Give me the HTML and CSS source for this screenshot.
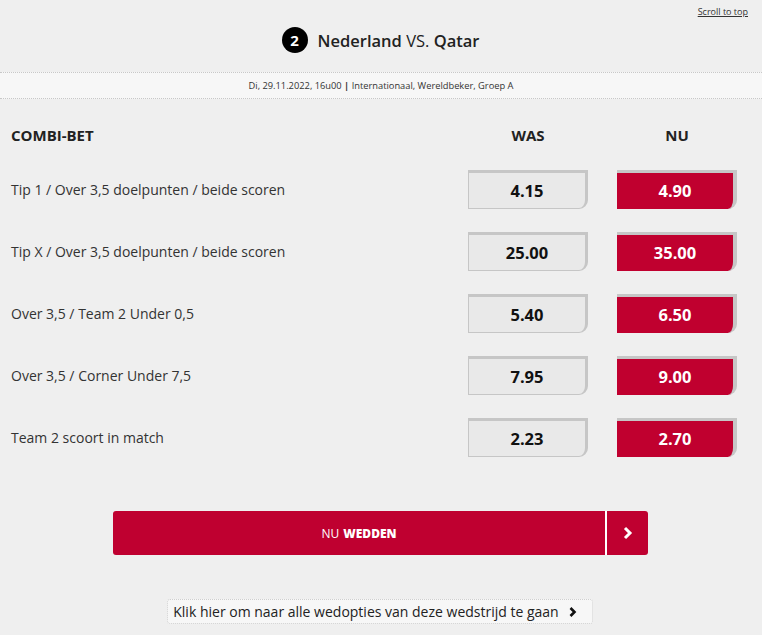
FILE: index.html
```html
<!DOCTYPE html>
<html lang="nl">
<head>
<meta charset="utf-8">
<title>Nederland vs Qatar</title>
<link rel="stylesheet" href="styles.css">
</head>
<body>
<div class="page">
  <header class="top">
    <div class="scroll-row"><a class="scroll-top" href="#">Scroll to top</a></div>
    <div class="match">
      <span class="badge">2</span>
      <span class="teams"><strong>Nederland</strong> VS. <strong>Qatar</strong></span>
    </div>
  </header>
  <div class="info">Di, 29.11.2022, 16u00 <b>|</b> Internationaal, Wereldbeker, Groep A</div>

  <section class="table">
    <div class="row head">
      <div class="label-h">COMBI-BET</div>
      <div class="col-h">WAS</div>
      <div class="col-h">NU</div>
    </div>
    <div class="row">
      <div class="label">Tip 1 / Over 3,5 doelpunten / beide scoren</div>
      <div class="odd was">4.15</div>
      <div class="odd nu">4.90</div>
    </div>
    <div class="row">
      <div class="label">Tip X / Over 3,5 doelpunten / beide scoren</div>
      <div class="odd was">25.00</div>
      <div class="odd nu">35.00</div>
    </div>
    <div class="row">
      <div class="label">Over 3,5 / Team 2 Under 0,5</div>
      <div class="odd was">5.40</div>
      <div class="odd nu">6.50</div>
    </div>
    <div class="row">
      <div class="label">Over 3,5 / Corner Under 7,5</div>
      <div class="odd was">7.95</div>
      <div class="odd nu">9.00</div>
    </div>
    <div class="row">
      <div class="label">Team 2 scoort in match</div>
      <div class="odd was">2.23</div>
      <div class="odd nu">2.70</div>
    </div>
  </section>

  <div class="cta-wrap">
    <a class="cta" href="#">
      <span class="cta-text">NU <b>WEDDEN</b></span>
      <span class="cta-arrow">
        <svg width="12" height="14" viewBox="0 0 12 14"><polyline points="3,2 8,7 3,12" fill="none" stroke="#fff" stroke-width="3" stroke-linejoin="miter"/></svg>
      </span>
    </a>
  </div>

  <div class="more-wrap">
    <a class="more" href="#">Klik hier om naar alle wedopties van deze wedstrijd te gaan
      <svg width="10" height="12" viewBox="0 0 10 12"><polyline points="2.5,2 6.5,6 2.5,10" fill="none" stroke="#111" stroke-width="2.6"/></svg>
    </a>
  </div>
</div>
</body>
</html>
```

FILE: styles.css
```css
* { box-sizing: border-box; }
html, body { margin: 0; padding: 0; }
body {
  background: #efefef;
  font-family: "Open Sans", "Noto Sans", sans-serif;
  color: #333;
}
.page { width: 762px; height: 635px; overflow: hidden; }

.top { padding: 6px 14px 19px; }
.scroll-row { display: flex; justify-content: flex-end; height: 12px; }
.scroll-top {
  font-size: 9px;
  line-height: 12px;
  color: #333;
  text-decoration: underline;
}
.match {
  margin-top: 9px;
  display: flex;
  align-items: center;
  justify-content: center;
  gap: 10px;
  height: 26px;
  padding-right: 1px;
}
.badge {
  width: 26px; height: 26px;
  border-radius: 50%;
  background: #000;
  color: #fff;
  font-weight: 700;
  font-size: 15px;
  display: flex; align-items: center; justify-content: center;
}
.teams { font-size: 16.5px; color: #222; font-weight: 400; }
.teams strong { font-weight: 600; }

.info {
  height: 27px;
  border-top: 1px dotted #c8c8c8;
  border-bottom: 1px dotted #c8c8c8;
  background: #f7f7f7;
  text-align: center;
  font-size: 9.3px;
  line-height: 25px;
  color: #333;
}
.info b { font-weight: 700; }

.table { padding: 21px 25px 0 11px; display: flex; flex-direction: column; gap: 23px; }
.row {
  display: grid;
  grid-template-columns: 1fr 120px 120px;
  column-gap: 29px;
  align-items: center;
}
.row.head { height: 30px; margin-bottom: -3px; }
.label-h { font-size: 15px; font-weight: 700; color: #222; }
.col-h { font-size: 15px; font-weight: 700; color: #222; text-align: center; }
.label { font-size: 14px; color: #333; }
.odd {
  height: 39px;
  display: flex; align-items: center; justify-content: center;
  font-family: "Open Sans", sans-serif;
  font-weight: 700;
  font-size: 16.5px;
  border-bottom-right-radius: 9px;
}
.was {
  background: #e9e9e9;
  color: #111;
  border: 1px solid #c6c6c6;
  border-top-width: 3px;
  border-right-width: 3px;
}
.nu {
  background: #c0002f;
  color: #fff;
  border-top: 3px solid #c6c6c6;
  border-right: 4px solid #c6c6c6;
  padding-bottom: 1px;
}

.cta-wrap { padding: 54px 0 0 113px; }
.cta {
  width: 535px;
  height: 44px;
  display: flex;
  background: #bf0030;
  border-radius: 3px;
  text-decoration: none;
  color: #fff;
}
.cta-text {
  flex: 1;
  display: flex; align-items: center; justify-content: center;
  font-size: 12px;
  border-right: 2px solid #fff;
}
.cta-text b { font-weight: 800; margin-left: 4px; }
.cta-arrow { width: 41px; display: flex; align-items: center; justify-content: center; }

.more-wrap { padding-top: 44px; display: flex; justify-content: center; padding-right: 2px; }
.more {
  height: 25px;
  padding: 0 14px 0 5px;
  display: flex; align-items: center; gap: 9px;
  background: #f7f7f7;
  border: 1px dotted #cfcfcf;
  border-radius: 3px;
  font-size: 14px;
  color: #222;
  text-decoration: none;
}
```
